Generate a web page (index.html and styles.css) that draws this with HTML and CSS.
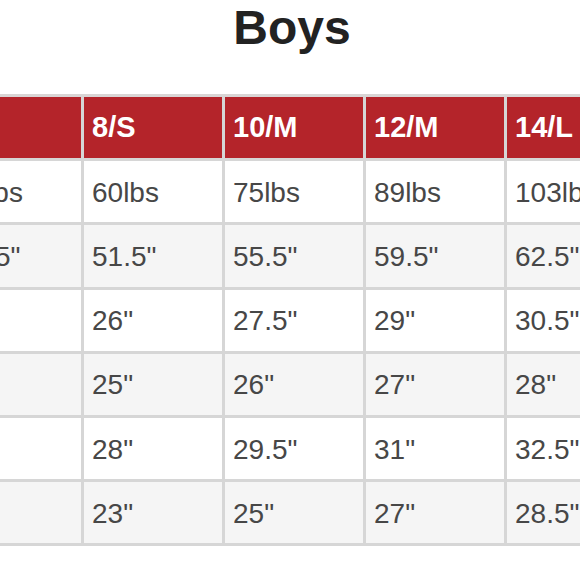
FILE: index.html
```html
<!DOCTYPE html>
<html lang="en">
<head>
<meta charset="utf-8">
<title>Boys Size Chart</title>
<link rel="stylesheet" href="styles.css">
</head>
<body>
<div class="page">
  <h1 class="title">Boys</h1>
  <div class="chart">
    <div class="cell head"></div>
    <div class="cell head">8/S</div>
    <div class="cell head">10/M</div>
    <div class="cell head">12/M</div>
    <div class="cell head">14/L</div>

    <div class="cell">48lbs</div>
    <div class="cell">60lbs</div>
    <div class="cell">75lbs</div>
    <div class="cell">89lbs</div>
    <div class="cell">103lbs</div>

    <div class="cell alt">47.5"</div>
    <div class="cell alt">51.5"</div>
    <div class="cell alt">55.5"</div>
    <div class="cell alt">59.5"</div>
    <div class="cell alt">62.5"</div>

    <div class="cell">25"</div>
    <div class="cell">26"</div>
    <div class="cell">27.5"</div>
    <div class="cell">29"</div>
    <div class="cell">30.5"</div>

    <div class="cell alt">24"</div>
    <div class="cell alt">25"</div>
    <div class="cell alt">26"</div>
    <div class="cell alt">27"</div>
    <div class="cell alt">28"</div>

    <div class="cell">27"</div>
    <div class="cell">28"</div>
    <div class="cell">29.5"</div>
    <div class="cell">31"</div>
    <div class="cell">32.5"</div>

    <div class="cell alt">22"</div>
    <div class="cell alt">23"</div>
    <div class="cell alt">25"</div>
    <div class="cell alt">27"</div>
    <div class="cell alt">28.5"</div>
  </div>
</div>
</body>
</html>
```

FILE: styles.css
```css
html, body {
  margin: 0;
  padding: 0;
  background: #ffffff;
  overflow: hidden;
}

.page {
  width: 580px;
  height: 580px;
  overflow: hidden;
  font-family: "Liberation Sans", Arial, sans-serif;
}

.title {
  margin: 0 0 39px 0;
  padding-left: 4px;
  text-align: center;
  font-size: 48px;
  font-weight: 700;
  line-height: normal;
  color: #222222;
}

.chart {
  display: grid;
  grid-template-columns: 136px 141px 141px 141px 141px;
  grid-auto-rows: 64.2px;
  width: max-content;
  margin-left: -55px;
  border-top: 3px solid #d9d5d5;
  border-left: 3px solid #d6d6d6;
}

.cell {
  box-sizing: border-box;
  display: flex;
  align-items: center;
  padding: 2px 0 0 8px;
  border-right: 3px solid #d6d6d6;
  border-bottom: 3px solid #d6d6d6;
  background: #ffffff;
  color: #474747;
  font-size: 28px;
  white-space: nowrap;
  overflow: hidden;
}

.cell.alt {
  background: #f5f5f5;
}

.cell.head {
  padding-top: 0;
  background: #b4242a;
  color: #ffffff;
  font-size: 29px;
  font-weight: 700;
}
```
